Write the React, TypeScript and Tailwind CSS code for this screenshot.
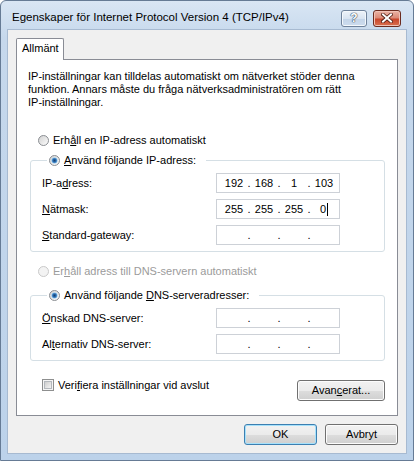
import React from "react";

const FONT = "font-['Liberation_Sans',Arial,sans-serif]";

function Radio({ checked = false, disabled = false }: { checked?: boolean; disabled?: boolean }) {
  return (
    <svg width="11" height="11" viewBox="0 0 11 11" aria-hidden="true" className="shrink-0">
      <defs>
        <linearGradient id="rb-fill" x1="0" y1="0" x2="1" y2="1">
          <stop offset="0" stopColor="#cfcfcf" />
          <stop offset="1" stopColor="#ffffff" />
        </linearGradient>
        <radialGradient id="rb-dot" cx="0.5" cy="0.5" r="0.5">
          <stop offset="0" stopColor="#173f6e" />
          <stop offset="0.55" stopColor="#2a6cb0" />
          <stop offset="1" stopColor="#86c3ef" />
        </radialGradient>
      </defs>
      <circle
        cx="5.5"
        cy="5.5"
        r="5"
        fill={disabled ? "#f3f3f3" : "url(#rb-fill)"}
        stroke={disabled ? "#c8c8c8" : "#8b8e93"}
      />
      {checked && <circle cx="5.5" cy="5.5" r="3" fill="url(#rb-dot)" />}
    </svg>
  );
}

function CheckBox() {
  return (
    <svg width="12" height="12" viewBox="0 0 12 12" aria-hidden="true" className="shrink-0">
      <defs>
        <linearGradient id="cb-fill" x1="0" y1="0" x2="1" y2="1">
          <stop offset="0" stopColor="#cbcbcb" />
          <stop offset="1" stopColor="#f7f7f7" />
        </linearGradient>
      </defs>
      <rect x="0.5" y="0.5" width="11" height="11" fill="#f5f5f5" stroke="#8e8f8f" />
      <rect x="2.5" y="2.5" width="7" height="7" fill="url(#cb-fill)" stroke="#b4b8bd" />
    </svg>
  );
}

function IpBox({ parts, caret = false }: { parts: string[]; caret?: boolean }) {
  return (
    <div className="flex h-[20px] w-[124px] items-center border border-[#cdd1d7] bg-white pl-[5px] text-black">
      {parts.map((p, i) => (
        <React.Fragment key={i}>
          {i > 0 && <span className="w-[6px] text-center">.</span>}
          <span className="flex w-[24px] items-center justify-center">
            {p}
            {caret && i === 3 && <span className="ml-[1px] inline-block h-[13px] w-px bg-black" />}
          </span>
        </React.Fragment>
      ))}
    </div>
  );
}

function WinButton({ children, primary = false, className = "" }: { children: React.ReactNode; primary?: boolean; className?: string }) {
  return (
    <button
      className={`flex h-[21px] items-center justify-center rounded-[3px] border bg-[linear-gradient(#f2f2f2_0%,#ebebeb_50%,#dddddd_51%,#cfcfcf_100%)] text-black ${
        primary
          ? "border-[#3c7fb1] shadow-[inset_0_0_0_1px_#a6e1fb]"
          : "border-[#707070] shadow-[inset_0_0_0_1px_#fcfcfc]"
      } ${className}`}
    >
      {children}
    </button>
  );
}

const empty = ["", "", "", ""];

export default function App() {
  return (
    <div
      className={`${FONT} flex h-[461px] w-[414px] flex-col rounded-t-[6px] border border-[#667b95] bg-[linear-gradient(180deg,#d9e6f4_0%,#c6d8ec_8%,#bcd2ea_100%)] text-[11px] text-black`}
    >
      {/* title bar */}
      <div className="flex h-[29px] items-center pl-[11px] pr-[12px] pt-[5px]">
        <span className="flex-1 text-[11.5px] text-black">
          Egenskaper för Internet Protocol Version 4 (TCP/IPv4)
        </span>
        <div className="flex items-center gap-[6px]">
          <div className="flex h-[17px] w-[26px] items-center justify-center rounded-[3px] border border-[#6f829b] bg-[linear-gradient(#eef3f9_0%,#d9e4f1_50%,#c3d4e8_51%,#cddcee_100%)] shadow-[inset_0_0_0_1px_#f4f8fc]">
            <span className="text-[12px] font-bold leading-none text-white [text-shadow:0_0_1px_#34465e,0_0_1px_#34465e,0_0_1px_#34465e]">
              ?
            </span>
          </div>
          <div className="flex h-[17px] w-[28px] items-center justify-center rounded-[3px] border border-[#6b2b1f] bg-[linear-gradient(#eab3a6_0%,#dc8a77_45%,#c8462c_55%,#d9714f_100%)] shadow-[inset_0_0_0_1px_#f0c2b6]">
            <svg width="12" height="10" viewBox="0 0 12 10" aria-hidden="true">
              <path d="M2 1.5 L10 8.5 M10 1.5 L2 8.5" stroke="#4d1a10" strokeWidth="3.6" strokeLinecap="square" />
              <path d="M2 1.5 L10 8.5 M10 1.5 L2 8.5" stroke="#ffffff" strokeWidth="2" strokeLinecap="square" />
            </svg>
          </div>
        </div>
      </div>

      {/* client area */}
      <div className="mx-[7px] flex h-[423px] flex-col bg-[#f0f0f0] pt-[8px] shadow-[0_0_0_1px_#a7bad1]">
        <div className="ml-[8px] flex">
          <div className="relative z-10 flex h-[22px] w-[48px] items-center rounded-t-[2px] border border-b-0 border-[#898c95] bg-white pb-[2px] pl-[5px]">
            Allmänt
          </div>
        </div>
        <div className="mx-[8px] -mt-px flex h-[357px] flex-col border border-[#898c95] bg-white px-[11px] pt-[10px]">
          <p className="leading-[13px]">
            IP-inställningar kan tilldelas automatiskt om nätverket stöder denna
            <br />
            funktion. Annars måste du fråga nätverksadministratören om rätt
            <br />
            IP-inställningar.
          </p>

          <div className="ml-[10px] mt-[24px] flex h-[14px] items-center gap-[4px]">
            <Radio />
            <span>
              Erh<u className="underline-offset-[1px]">å</u>ll en IP-adress automatiskt
            </span>
          </div>

          <fieldset className="ml-[2px] mr-[1px] mt-[6px] rounded-[3px] border border-[#d5dfe5] pb-[6px] pl-[11px] pt-[6px]">
            <legend className="ml-[5px] h-[14px] pl-[2px] pr-[10px]">
              <span className="flex h-[14px] items-center gap-[4px]">
                <Radio checked />
                <span>
                  <u className="underline-offset-[1px]">A</u>nvänd följande IP-adress:
                </span>
              </span>
            </legend>
            <div className="grid grid-cols-[174px_124px] items-center gap-y-[6px]">
              <span>
                IP-a<u className="underline-offset-[1px]">d</u>ress:
              </span>
              <IpBox parts={["192", "168", "1", "103"]} />
              <span>
                <u className="underline-offset-[1px]">N</u>ätmask:
              </span>
              <IpBox parts={["255", "255", "255", "0"]} caret />
              <span>
                <u className="underline-offset-[1px]">S</u>tandard-gateway:
              </span>
              <IpBox parts={empty} />
            </div>
          </fieldset>

          <div className="ml-[10px] mt-[12px] flex h-[14px] items-center gap-[4px] text-[#9b9b9b]">
            <Radio disabled />
            <span>
              Er<u className="underline-offset-[1px]">h</u>åll adress till DNS-servern automatiskt
            </span>
          </div>

          <fieldset className="ml-[2px] mr-[1px] mt-[10px] rounded-[3px] border border-[#d5dfe5] pb-[6px] pl-[11px] pt-[6px]">
            <legend className="ml-[5px] h-[14px] pl-[2px] pr-[10px]">
              <span className="flex h-[14px] items-center gap-[4px]">
                <Radio checked />
                <span>
                  Använd följande <u className="underline-offset-[1px]">D</u>NS-serveradresser:
                </span>
              </span>
            </legend>
            <div className="grid grid-cols-[174px_124px] items-center gap-y-[6px]">
              <span>
                <u className="underline-offset-[1px]">Ö</u>nskad DNS-server:
              </span>
              <IpBox parts={empty} />
              <span>
                Al<u className="underline-offset-[1px]">t</u>ernativ DNS-server:
              </span>
              <IpBox parts={empty} />
            </div>
          </fieldset>

          <div className="mr-[1px] mt-[17px] flex items-start justify-between">
            <div className="ml-[14px] flex h-[14px] items-center gap-[4px]">
              <CheckBox />
              <span>
                Veri<u className="underline-offset-[1px]">f</u>iera inställningar vid avslut
              </span>
            </div>
            <WinButton className="mt-[2px] w-[88px]">
              Avan<u className="underline-offset-[1px]">c</u>erat...
            </WinButton>
          </div>
        </div>

        <div className="mr-[8px] mt-[8px] flex justify-end gap-[8px]">
          <WinButton primary className="w-[73px]">
            OK
          </WinButton>
          <WinButton className="w-[73px]">Avbryt</WinButton>
        </div>
      </div>
    </div>
  );
}
